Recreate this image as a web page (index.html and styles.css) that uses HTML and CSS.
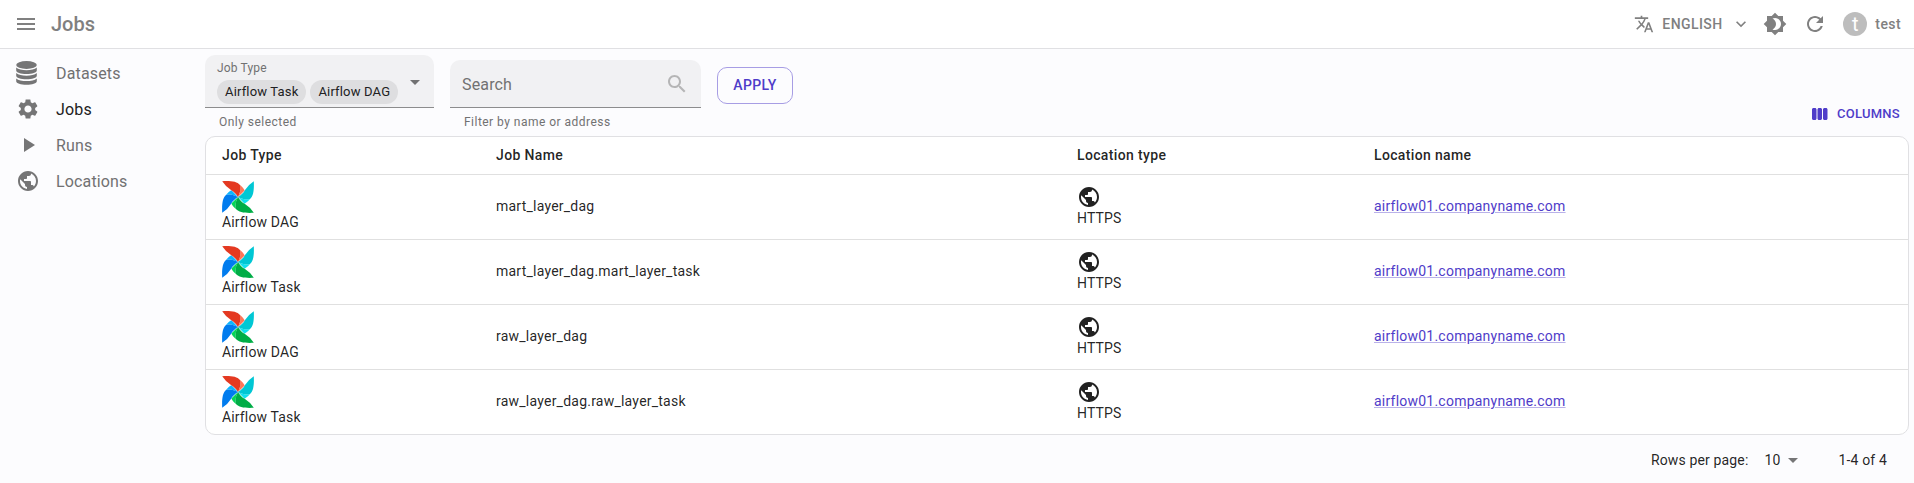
FILE: index.html
```
<!DOCTYPE html>
<html lang="en">
<head>
<meta charset="utf-8">
<title>Jobs</title>
<link rel="stylesheet" href="styles.css">
</head>
<body>
<svg class="defs" aria-hidden="true">
  <symbol id="menu" viewBox="0 0 24 24"><path d="M3 18h18v-2H3v2zm0-5h18v-2H3v2zm0-7v2h18V6H3z"/></symbol>
  <symbol id="translate" viewBox="0 0 24 24"><path d="M12.87 15.07l-2.54-2.51.03-.03c1.74-1.94 2.98-4.17 3.71-6.53H17V4h-7V2H8v2H1v1.99h11.17C11.5 7.92 10.44 9.75 9 11.35 8.07 10.32 7.3 9.19 6.69 8h-2c.73 1.63 1.73 3.17 2.98 4.56l-5.09 5.02L4 19l5-5 3.11 3.11.76-2.04zM18.5 10h-2L12 22h2l1.12-3h4.75L21 22h2l-4.5-12zm-2.62 7l1.62-4.33L19.12 17h-3.24z"/></symbol>
  <symbol id="expand" viewBox="0 0 24 24"><path d="M16.59 8.59 12 13.17 7.41 8.59 6 10l6 6 6-6z"/></symbol>
  <symbol id="brightness" viewBox="0 0 24 24"><path d="M20 8.69V4h-4.69L12 .69 8.69 4H4v4.69L.69 12 4 15.31V20h4.69L12 23.31 15.31 20H20v-4.69L23.31 12 20 8.69zM12 18c-.89 0-1.74-.2-2.5-.55C11.56 16.5 13 14.42 13 12s-1.44-4.5-3.5-5.45C10.26 6.2 11.11 6 12 6c3.31 0 6 2.69 6 6s-2.69 6-6 6z"/></symbol>
  <symbol id="refresh" viewBox="0 0 24 24"><path d="M17.65 6.35C16.2 4.9 14.21 4 12 4c-4.42 0-7.99 3.58-7.99 8s3.57 8 7.99 8c3.73 0 6.84-2.55 7.73-6h-2.08c-.82 2.33-3.04 4-5.65 4-3.31 0-6-2.69-6-6s2.69-6 6-6c1.66 0 3.14.69 4.22 1.78L13 11h7V4l-2.35 2.35z"/></symbol>
  <symbol id="database" viewBox="0 0 21 24"><ellipse cx="10.5" cy="4" rx="10.3" ry="3.9"/><path d="M.2 6.600c2 2 6 2.700 10.300 2.700s8.300-.700 10.300-2.700v2.900c0 2-4.600 3.500-10.300 3.500S.2 11.500.2 9.500zM.2 12c2 2 6 2.700 10.300 2.700s8.300-.7 10.300-2.700v2.800c0 2-4.600 3.500-10.300 3.500S.2 16.800.2 14.800zM.2 17.400c2 2 6 2.700 10.300 2.700s8.300-.7 10.300-2.700v2.800c0 2-4.600 3.600-10.300 3.600S.2 22.200.2 20.200z"/></symbol>
  <symbol id="settings" viewBox="0 0 24 24"><path d="M19.14 12.94c.04-.3.06-.61.06-.94 0-.32-.02-.64-.07-.94l2.03-1.58c.18-.14.23-.41.12-.61l-1.92-3.32c-.12-.22-.37-.29-.59-.22l-2.39.96c-.5-.38-1.03-.7-1.62-.94l-.36-2.54c-.04-.24-.24-.41-.48-.41h-3.84c-.24 0-.43.17-.47.41l-.36 2.54c-.59.24-1.13.57-1.62.94l-2.39-.96c-.22-.08-.47 0-.59.22L2.74 8.87c-.12.21-.08.47.12.61l2.03 1.58c-.05.3-.09.63-.09.94s.02.64.07.94l-2.03 1.58c-.18.14-.23.41-.12.61l1.92 3.32c.12.22.37.29.59.22l2.39-.96c.5.38 1.03.7 1.62.94l.36 2.54c.05.24.24.41.48.41h3.84c.24 0 .44-.17.47-.41l.36-2.54c.59-.24 1.13-.56 1.62-.94l2.39.96c.22.08.47 0 .59-.22l1.92-3.32c.12-.22.07-.47-.12-.61l-2.01-1.58zM12 15.6c-1.98 0-3.6-1.62-3.6-3.6s1.62-3.6 3.6-3.6 3.6 1.62 3.6 3.6-1.62 3.6-3.6 3.6z"/></symbol>
  <symbol id="play" viewBox="0 0 24 24"><path d="M8 5v14l11-7z"/></symbol>
  <symbol id="globe" viewBox="0 0 24 24"><path d="M12 2C6.48 2 2 6.48 2 12s4.48 10 10 10 10-4.480 10-10S17.520 2 12 2zm-1 17.930c-3.950-.490-7-3.850-7-7.930 0-.620.080-1.210.210-1.790L9 15v1c0 1.100.900 2 2 2v1.930zm6.900-2.540c-.260-.810-1-1.390-1.900-1.390h-1v-3c0-.550-.450-1-1-1H8v-2h2c.550 0 1-.450 1-1V7h2c1.100 0 2-.900 2-2v-.410c2.930 1.190 5 4.060 5 7.410 0 2.080-.800 3.970-2.100 5.390z"/></symbol>
  <symbol id="caret" viewBox="0 0 24 24"><path d="m7 10 5 5 5-5z"/></symbol>
  <symbol id="search" viewBox="0 0 24 24"><path d="M15.5 14h-.79l-.28-.27C15.41 12.59 16 11.11 16 9.5 16 5.91 13.09 3 9.5 3S3 5.91 3 9.5 5.91 16 9.5 16c1.61 0 3.09-.59 4.23-1.57l.27.28v.79l5 4.99L20.49 19l-4.99-5zm-6 0C7.01 14 5 11.99 5 9.5S7.01 5 9.5 5 14 7.01 14 9.5 11.99 14 9.5 14z"/></symbol>
  <symbol id="columns" viewBox="0 0 24 24"><path d="M5.330 20H3.330c-1.100 0-2-.900-2-2V6c0-1.100.900-2 2-2h2c1.100 0 2 .900 2 2v12c0 1.100-.890 2-2 2zM22 18V6c0-1.100-.900-2-2-2h-2c-1.100 0-2 .900-2 2v12c0 1.100.900 2 2 2h2c1.110 0 2-.900 2-2zm-7.330 0V6c0-1.100-.900-2-2-2h-2c-1.100 0-2 .900-2 2v12c0 1.100.900 2 2 2h2c1.100 0 2-.900 2-2z"/></symbol>
  <symbol id="blade" viewBox="0 0 32 32"><path d="M.2.200C9-.200 15 .500 18 4c1.300 4 0 8-2 12C14.500 13.500 12 10.500 9 9Q4 6 .2.200Z"/></symbol>
  <symbol id="fold" viewBox="0 0 32 32"><path d="M18 4C20.500 6 22.200 8.300 22.700 9.500L16 16C18 12 19.300 8 18 4Z"/></symbol>
  <symbol id="airflow" viewBox="0 0 32 32">
    <use href="#fold" width="32" height="32" fill="#ff7557"/>
    <use href="#fold" width="32" height="32" fill="#11e1ee" transform="rotate(90 16 16)"/>
    <use href="#fold" width="32" height="32" fill="#04d659" transform="rotate(180 16 16)"/>
    <use href="#fold" width="32" height="32" fill="#0cb6ff" transform="rotate(270 16 16)"/>
    <use href="#blade" width="32" height="32" fill="#e43921"/>
    <use href="#blade" width="32" height="32" fill="#00c7d4" transform="rotate(90 16 16)"/>
    <use href="#blade" width="32" height="32" fill="#00ad46" transform="rotate(180 16 16)"/>
    <use href="#blade" width="32" height="32" fill="#017cee" transform="rotate(270 16 16)"/>
  </symbol>
</svg>

<header class="appbar">
  <svg class="icon"><use href="#menu"/></svg>
  <h1 class="title">Jobs</h1>
  <div class="locale">
    <svg class="icon icon-20"><use href="#translate"/></svg>
    <span class="locale-name">ENGLISH</span>
    <svg class="icon icon-20"><use href="#expand"/></svg>
  </div>
  <svg class="icon theme"><use href="#brightness"/></svg>
  <svg class="icon reload"><use href="#refresh"/></svg>
  <div class="user"><span class="avatar">t</span><span>test</span></div>
</header>

<div class="layout">
  <nav class="sidebar">
    <a class="nav-item"><svg class="icon-db"><use href="#database"/></svg><span>Datasets</span></a>
    <a class="nav-item active"><svg class="icon"><use href="#settings"/></svg><span>Jobs</span></a>
    <a class="nav-item"><svg class="icon"><use href="#play"/></svg><span>Runs</span></a>
    <a class="nav-item"><svg class="icon"><use href="#globe"/></svg><span>Locations</span></a>
  </nav>

  <main class="content">
    <div class="toolbar">
      <div class="field field-type">
        <div class="input input-type">
          <div class="type-body">
            <label class="label">Job Type</label>
            <div class="chips"><span class="chip">Airflow Task</span><span class="chip">Airflow DAG</span></div>
          </div>
          <svg class="icon"><use href="#caret"/></svg>
        </div>
        <p class="helper">Only selected</p>
      </div>
      <div class="field field-search">
        <div class="input input-search"><span>Search</span><svg class="icon"><use href="#search"/></svg></div>
        <p class="helper">Filter by name or address</p>
      </div>
      <button class="apply">APPLY</button>
      <div class="columns-btn"><svg class="icon icon-18"><use href="#columns"/></svg><span>COLUMNS</span></div>
    </div>

    <section class="table">
      <div class="row head"><div>Job Type</div><div>Job Name</div><div>Location type</div><div>Location name</div></div>
      <div class="row">
        <div class="stack"><svg class="logo"><use href="#airflow"/></svg><span>Airflow DAG</span></div>
        <div class="name">mart_layer_dag</div>
        <div class="stack"><svg class="icon"><use href="#globe"/></svg><span>HTTPS</span></div>
        <div class="name"><a class="link">airflow01.companyname.com</a></div>
      </div>
      <div class="row">
        <div class="stack"><svg class="logo"><use href="#airflow"/></svg><span>Airflow Task</span></div>
        <div class="name">mart_layer_dag.mart_layer_task</div>
        <div class="stack"><svg class="icon"><use href="#globe"/></svg><span>HTTPS</span></div>
        <div class="name"><a class="link">airflow01.companyname.com</a></div>
      </div>
      <div class="row">
        <div class="stack"><svg class="logo"><use href="#airflow"/></svg><span>Airflow DAG</span></div>
        <div class="name">raw_layer_dag</div>
        <div class="stack"><svg class="icon"><use href="#globe"/></svg><span>HTTPS</span></div>
        <div class="name"><a class="link">airflow01.companyname.com</a></div>
      </div>
      <div class="row">
        <div class="stack"><svg class="logo"><use href="#airflow"/></svg><span>Airflow Task</span></div>
        <div class="name">raw_layer_dag.raw_layer_task</div>
        <div class="stack"><svg class="icon"><use href="#globe"/></svg><span>HTTPS</span></div>
        <div class="name"><a class="link">airflow01.companyname.com</a></div>
      </div>
    </section>

    <footer class="pagination">
      <span>Rows per page:</span>
      <span class="size">10<svg class="icon"><use href="#caret"/></svg></span>
      <span>1-4 of 4</span>
    </footer>
  </main>
</div>
</body>
</html>
```
FILE: styles.css
```
* { box-sizing: border-box; }
body {
  margin: 0;
  height: 483px;
  overflow: hidden;
  background: #fcfcfe;
  color: rgba(0, 0, 0, 0.87);
  font: 400 14px/20px Roboto, sans-serif;
  letter-spacing: 0.15px;
}
.defs { display: none; }
.icon { display: block; flex: none; width: 24px; height: 24px; fill: currentColor; }
.icon-20 { width: 20px; height: 20px; }
.icon-18 { width: 18px; height: 18px; }

.appbar {
  display: flex;
  align-items: center;
  height: 49px;
  padding: 0 13px 0 14px;
  background: #fff;
  border-bottom: 1px solid #e0e0e3;
  color: #808080;
  font-weight: 500;
}
.title { flex: 1; margin: 0 0 0 13px; font-size: 20px; font-weight: 500; line-height: 32px; letter-spacing: 0; }
.locale { display: flex; align-items: center; letter-spacing: 0.4px; }
.locale-name { width: 61px; margin: 0 8px; }
.theme { margin-left: 12px; }
.reload { margin-left: 16px; }
.user { display: flex; align-items: center; gap: 8px; margin-left: 16px; letter-spacing: 0.4px; }
.avatar {
  display: grid;
  place-items: center;
  width: 24px;
  height: 24px;
  border-radius: 50%;
  background: #bdbdbd;
  color: #fff;
  font-size: 20px;
  font-weight: 400;
  letter-spacing: 0;
}

.layout { display: flex; }
.sidebar { width: 205px; padding-top: 6px; color: #717172; font-size: 16px; line-height: 24px; }
.nav-item { display: flex; align-items: center; height: 36px; padding-left: 16px; }
.nav-item > svg { fill: #757576; }
.nav-item > span { padding-top: 2px; }
.nav-item .icon-db { width: 21px; height: 24px; margin-right: 19px; }
.nav-item .icon { margin-right: 16px; }
.active { color: #212122; }

.content { flex: 1; padding-right: 5px; }
.toolbar { display: flex; align-items: flex-end; height: 87px; }
.field { margin-right: 16px; }
.input { display: flex; align-items: center; border-bottom: 1px solid #8c8c8d; border-radius: 10px 10px 0 0; background: #f1f1f3; color: #717172; }
.input-type { width: 229px; height: 53px; padding: 0 7px 0 12px; justify-content: space-between; }
.input-type .icon { margin-top: 2px; }
.type-body { padding-top: 1px; }
.label { display: block; font-size: 12px; line-height: 19px; }
.chips { display: flex; gap: 4px; padding-top: 2px; }
.chip { height: 24px; padding: 0 8px; border-radius: 12px; background: #dedee0; color: #212122; font-size: 13px; line-height: 24px; letter-spacing: 0.17px; }
.input-search { width: 251px; height: 48px; padding: 1px 12px 0; justify-content: space-between; font-size: 16px; }
.input-search span { padding-top: 2px; }
.input-search .icon { color: #b5b5b6; }
.helper { margin: 4px 14px; color: #717172; font-size: 12px; line-height: 20px; letter-spacing: 0.47px; }
.apply {
  width: 76px;
  height: 37px;
  margin: 0 auto 32px 0;
  padding: 0 0 1px;
  border: 1px solid #a79de4;
  border-radius: 10px;
  background: transparent;
  color: #4f3cc9;
  font: 500 14px/24px Roboto, sans-serif;
  letter-spacing: 0.4px;
}
.columns-btn { display: flex; align-items: center; gap: 8px; margin: 0 9px 11px 0; color: #4f3cc9; font-size: 13px; font-weight: 500; line-height: 22px; letter-spacing: 0.28px; }
.columns-btn span { padding-top: 1px; }

.table { border: 1px solid #e0e0e3; border-radius: 10px; background: #fff; }
.row { display: grid; grid-template-columns: 274px 581px 297px 1fr; align-items: center; height: 65px; border-bottom: 1px solid #e0e0e0; }
.row:last-child { height: 64px; border-bottom: 0; }
.row > div { padding: 0 16px; }
.row > .name { padding-bottom: 2px; letter-spacing: 0.23px; }
.row.head { height: 38px; font-weight: 500; letter-spacing: 0.35px; }
.row.head > div { padding-bottom: 2px; }
.stack { display: flex; flex-direction: column; align-items: flex-start; }
.stack span { margin-top: -1px; padding-bottom: 1px; }
.logo { display: block; width: 32px; height: 32px; }
.link { color: #4f3cc9; text-decoration: underline; text-decoration-color: rgba(79, 60, 201, 0.4); }

.pagination { display: flex; align-items: center; justify-content: flex-end; height: 50px; padding-right: 22px; }
.size { display: flex; align-items: center; margin: 0 34px 0 16px; }
.size .icon { color: #757576; }
```
